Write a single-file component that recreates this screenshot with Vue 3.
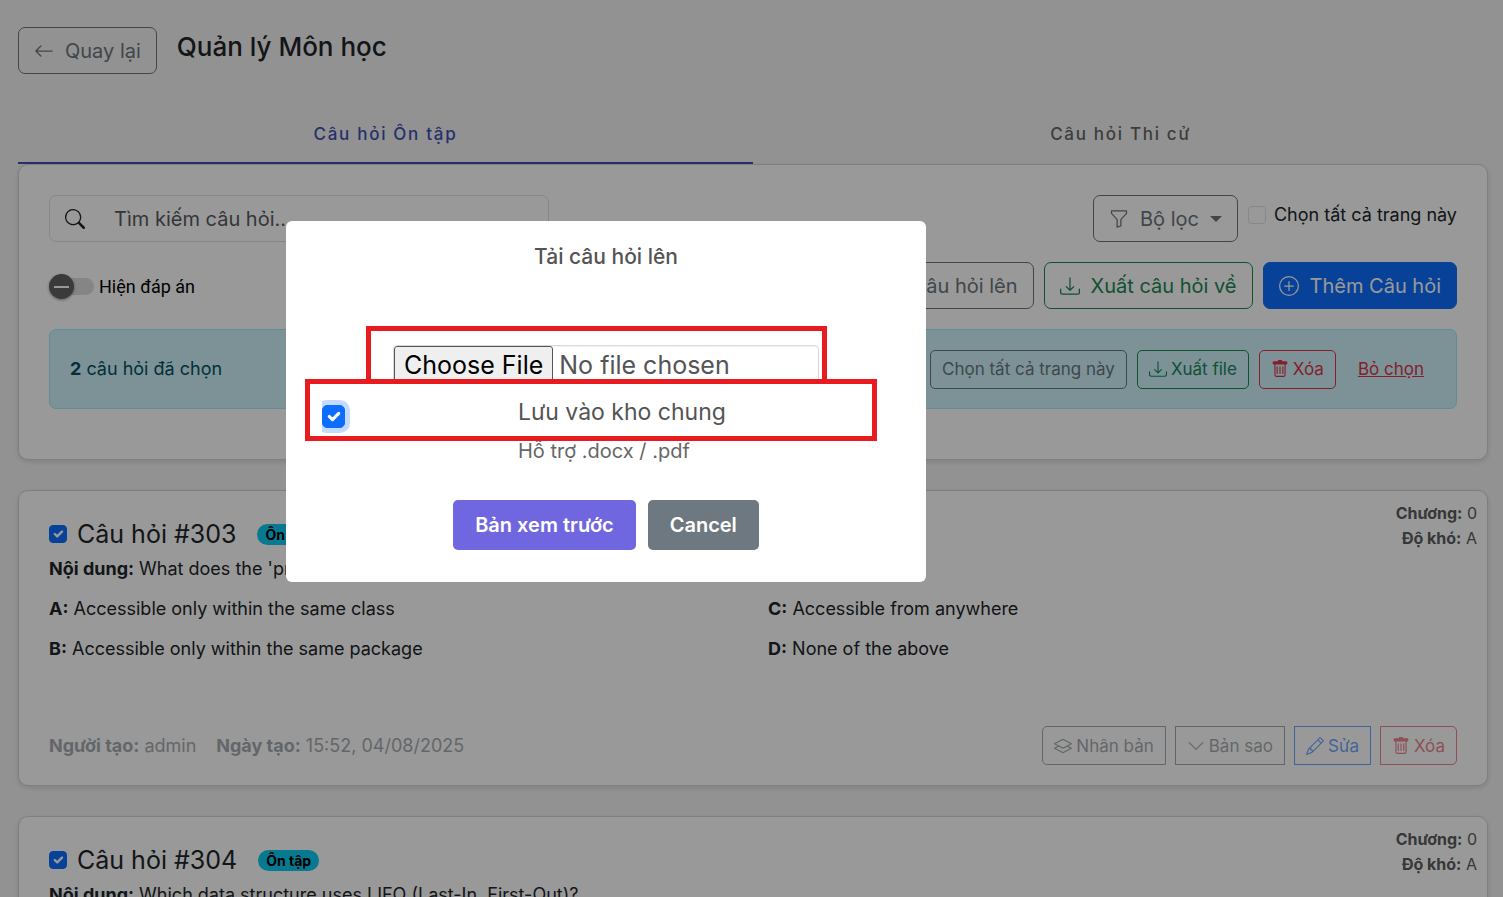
<script setup>
import { ref, h } from 'vue'

const paths = {
  back: ['M15 8a.5.5 0 0 0-.5-.5H2.707l3.147-3.146a.5.5 0 1 0-.708-.708l-4 4a.5.5 0 0 0 0 .708l4 4a.5.5 0 0 0 .708-.708L2.707 8.5H14.5A.5.5 0 0 0 15 8'],
  search: ['M11.742 10.344a6.5 6.5 0 1 0-1.397 1.398h-.001q.044.06.098.115l3.85 3.85a1 1 0 0 0 1.415-1.414l-3.85-3.85a1 1 0 0 0-.115-.1zM12 6.5a5.5 5.5 0 1 1-11 0 5.5 5.5 0 0 1 11 0'],
  funnel: ['M1.5 1.5A.5.5 0 0 1 2 1h12a.5.5 0 0 1 .5.5v2a.5.5 0 0 1-.128.334L10 8.692V13.5a.5.5 0 0 1-.342.474l-3 1A.5.5 0 0 1 6 14.5V8.692L1.628 3.834A.5.5 0 0 1 1.5 3.5zm1 .5v1.308l4.372 4.858A.5.5 0 0 1 7 8.5v5.306l2-.666V8.5a.5.5 0 0 1 .128-.334L13.5 3.308V2z'],
  download: ['M.5 9.9a.5.5 0 0 1 .5.5v2.5a1 1 0 0 0 1 1h12a1 1 0 0 0 1-1v-2.5a.5.5 0 0 1 1 0v2.5a2 2 0 0 1-2 2H2a2 2 0 0 1-2-2v-2.5a.5.5 0 0 1 .5-.5', 'M7.646 11.854a.5.5 0 0 0 .708 0l3-3a.5.5 0 0 0-.708-.708L8.5 10.293V1.5a.5.5 0 0 0-1 0v8.793L5.354 8.146a.5.5 0 1 0-.708.708z'],
  upload: ['M.5 9.9a.5.5 0 0 1 .5.5v2.5a1 1 0 0 0 1 1h12a1 1 0 0 0 1-1v-2.5a.5.5 0 0 1 1 0v2.5a2 2 0 0 1-2 2H2a2 2 0 0 1-2-2v-2.5a.5.5 0 0 1 .5-.5', 'M7.646 1.146a.5.5 0 0 1 .708 0l3 3a.5.5 0 0 1-.708.708L8.5 2.707V11.5a.5.5 0 0 1-1 0V2.707L5.354 4.854a.5.5 0 1 1-.708-.708z'],
  plus: ['M8 15A7 7 0 1 1 8 1a7 7 0 0 1 0 14m0 1A8 8 0 1 0 8 0a8 8 0 0 0 0 16', 'M8 4a.5.5 0 0 1 .5.5v3h3a.5.5 0 0 1 0 1h-3v3a.5.5 0 0 1-1 0v-3h-3a.5.5 0 0 1 0-1h3v-3A.5.5 0 0 1 8 4'],
  trash: ['M5.5 5.5A.5.5 0 0 1 6 6v6a.5.5 0 0 1-1 0V6a.5.5 0 0 1 .5-.5m2.5 0a.5.5 0 0 1 .5.5v6a.5.5 0 0 1-1 0V6a.5.5 0 0 1 .5-.5m3 .5a.5.5 0 0 0-1 0v6a.5.5 0 0 0 1 0z', 'M14.5 3a1 1 0 0 1-1 1H13v9a2 2 0 0 1-2 2H5a2 2 0 0 1-2-2V4h-.5a1 1 0 0 1-1-1V2a1 1 0 0 1 1-1H6a1 1 0 0 1 1-1h2a1 1 0 0 1 1 1h3.5a1 1 0 0 1 1 1zM4.118 4 4 4.059V13a1 1 0 0 0 1 1h6a1 1 0 0 0 1-1V4.059L11.882 4z'],
  pencil: ['M12.146.146a.5.5 0 0 1 .708 0l3 3a.5.5 0 0 1 0 .708l-10 10a.5.5 0 0 1-.168.11l-5 2a.5.5 0 0 1-.65-.65l2-5a.5.5 0 0 1 .11-.168zM11.207 2.5 13.5 4.793 14.793 3.5 12.5 1.207zm1.586 3L10.5 3.207 4 9.707V10h.5a.5.5 0 0 1 .5.5v.5h.5a.5.5 0 0 1 .5.5v.5h.293zm-9.761 5.175-.106.106-1.528 3.821 3.821-1.528.106-.106A.5.5 0 0 1 5 12.5V12h-.5a.5.5 0 0 1-.5-.5V11h-.5a.5.5 0 0 1-.468-.325'],
  chevron: ['M1.646 4.646a.5.5 0 0 1 .708 0L8 10.293l5.646-5.647a.5.5 0 0 1 .708.708l-6 6a.5.5 0 0 1-.708 0l-6-6a.5.5 0 0 1 0-.708'],
  layers: ['M8.235 1.559a.5.5 0 0 0-.47 0l-7.5 4a.5.5 0 0 0 0 .882L3.188 8 .264 9.559a.5.5 0 0 0 0 .882l7.5 4a.5.5 0 0 0 .47 0l7.5-4a.5.5 0 0 0 0-.882L12.813 8l2.922-1.559a.5.5 0 0 0 0-.882zm3.515 7.008L14.438 10 8 13.433 1.562 10 4.25 8.567l3.515 1.874a.5.5 0 0 0 .47 0zM8 9.433 1.562 6 8 2.567 14.438 6z'],
}

const Icon = (props) =>
  h('svg', { viewBox: '0 0 16 16', width: props.size, height: props.size, fill: 'currentColor', 'aria-hidden': 'true' },
    paths[props.name].map((d) => h('path', { d, 'fill-rule': 'evenodd' })))
Icon.props = { name: String, size: { type: Number, default: 20 } }

const showAnswers = ref(false)
const selectPage = ref(false)
const saveShared = ref(true)

const questions = ref([
  {
    id: 303,
    selected: true,
    text: "What does the 'private' access modifier mean?",
    answers: [
      ['A', 'Accessible only within the same class'],
      ['C', 'Accessible from anywhere'],
      ['B', 'Accessible only within the same package'],
      ['D', 'None of the above'],
    ],
  },
  {
    id: 304,
    selected: true,
    text: 'Which data structure uses LIFO (Last-In, First-Out)?',
    answers: [],
  },
])
</script>

<template>
  <div class="screen">
    <main class="page">
      <header class="head">
        <button type="button" class="btn grey"><Icon name="back" />Quay lại</button>
        <h1>Quản lý Môn học</h1>
      </header>

      <nav class="tabs">
        <button type="button" class="tab active">Câu hỏi Ôn tập</button>
        <button type="button" class="tab">Câu hỏi Thi cử</button>
      </nav>

      <section class="card tools">
        <div class="row">
          <div class="search">
            <Icon name="search" />
            <input type="text" aria-label="Tìm kiếm câu hỏi" placeholder="Tìm kiếm câu hỏi..." />
          </div>
          <div class="filters">
            <button type="button" class="btn grey"><Icon name="funnel" />Bộ lọc<span class="caret"></span></button>
            <label class="check-label"><input v-model="selectPage" type="checkbox" class="check" />Chọn tất cả trang này</label>
          </div>
        </div>
        <div class="row">
          <label class="toggle">
            <input v-model="showAnswers" type="checkbox" role="switch" />
            <span>Hiện đáp án</span>
          </label>
          <div class="group">
            <button type="button" class="btn grey"><Icon name="upload" />Tải câu hỏi lên</button>
            <button type="button" class="btn green"><Icon name="download" />Xuất câu hỏi về</button>
            <button type="button" class="btn solid"><Icon name="plus" />Thêm Câu hỏi</button>
          </div>
        </div>
        <div class="notice">
          <p><b>2</b> câu hỏi đã chọn</p>
          <div class="group">
            <button type="button" class="btn small grey">Chọn tất cả trang này</button>
            <button type="button" class="btn small green"><Icon name="download" :size="18" />Xuất file</button>
            <button type="button" class="btn small red"><Icon name="trash" :size="18" />Xóa</button>
            <button type="button" class="btn small link">Bỏ chọn</button>
          </div>
        </div>
      </section>

      <article v-for="q in questions" :key="q.id" class="card question">
        <div class="meta">
          <div><b>Chương:</b> 0</div>
          <div><b>Độ khó:</b> A</div>
        </div>
        <div class="title">
          <input v-model="q.selected" type="checkbox" class="check" :aria-label="'Chọn câu hỏi ' + q.id" />
          <h2>Câu hỏi #{{ q.id }}</h2>
          <span class="badge">Ôn tập</span>
        </div>
        <p class="content"><b>Nội dung:</b> {{ q.text }}</p>
        <div v-if="q.answers.length" class="answers">
          <p v-for="a in q.answers" :key="a[0]"><b>{{ a[0] }}:</b> {{ a[1] }}</p>
        </div>
        <footer v-if="q.answers.length">
          <div class="author">
            <span><b>Người tạo:</b> admin</span>
            <span><b>Ngày tạo:</b> 15:52, 04/08/2025</span>
          </div>
          <div class="actions">
            <button type="button" class="btn small grey"><Icon name="layers" :size="18" />Nhân bản</button>
            <button type="button" class="btn small grey"><Icon name="chevron" :size="18" />Bản sao</button>
            <button type="button" class="btn small blue"><Icon name="pencil" :size="18" />Sửa</button>
            <button type="button" class="btn small red"><Icon name="trash" :size="18" />Xóa</button>
          </div>
        </footer>
      </article>
    </main>

    <div class="backdrop">
      <div class="dialog" role="dialog" aria-modal="true" aria-labelledby="dialog-title">
        <h2 id="dialog-title">Tải câu hỏi lên</h2>
        <div class="file-clip">
          <input type="file" class="file" aria-label="Tải câu hỏi lên" accept=".docx,.pdf" />
        </div>
        <div class="share">
          <input id="share" v-model="saveShared" type="checkbox" class="check large" />
          <label for="share">Lưu vào kho chung</label>
        </div>
        <p class="hint">Hỗ trợ .docx / .pdf</p>
        <div class="dialog-actions">
          <button type="button" class="confirm">Bản xem trước</button>
          <button type="button" class="cancel">Cancel</button>
        </div>
        <div class="mark mark-file"></div>
        <div class="mark mark-share"></div>
      </div>
    </div>
  </div>
</template>

<style>
body {
  margin: 0;
  background: #f4f4f4;
}
</style>

<style scoped>
.screen {
  height: 100vh;
  overflow: hidden;
  font-family: Inter, "Noto Sans", sans-serif;
  font-size: 18px;
  line-height: 26px;
  color: #212529;
}
.screen * {
  box-sizing: border-box;
}
h1, h2, p {
  margin: 0;
  font-weight: 400;
}
button, input {
  font-family: inherit;
}
b {
  font-weight: 700;
}
svg {
  flex: none;
}
.page {
  padding: 27px 15px 0 18px;
}
.head {
  display: flex;
  gap: 20px;
  height: 77px;
  align-items: flex-start;
}
.head h1 {
  font-size: 26px;
  line-height: 40px;
  font-weight: 500;
}
.btn {
  display: inline-flex;
  align-items: center;
  gap: 11px;
  height: 47px;
  padding: 0 15px;
  border: 1px solid currentColor;
  border-radius: 7px;
  background: transparent;
  font-size: 20px;
  white-space: nowrap;
}
.btn.small {
  height: 39px;
  padding: 0 11px;
  gap: 4px;
  border-radius: 5px;
  font-size: 17px;
}
.grey { color: #6c757d; }
.green { color: #198754; }
.red { color: #dc3545; }
.blue { color: #0d6efd; }
.solid {
  background: #0d6efd;
  border-color: #0d6efd;
  color: #fff;
}
.btn.link {
  border-color: transparent;
  color: #dc3545;
  text-decoration: underline;
}
.tabs {
  display: flex;
  height: 60px;
}
.tab {
  flex: 1;
  border: 0;
  border-bottom: 2px solid transparent;
  background: none;
  padding: 2px 0 0;
  font-size: 17px;
  font-weight: 500;
  letter-spacing: 0.1em;
  color: #666;
}
.tab.active {
  color: #3f51b5;
  border-color: #3f51b5;
}
.card {
  position: relative;
  background: #fff;
  border: 1px solid #d4d4d4;
  border-radius: 10px;
  box-shadow: 0 2px 5px rgba(0, 0, 0, 0.12);
  padding: 30px;
  margin-bottom: 30px;
}
.tools {
  display: flex;
  flex-direction: column;
  gap: 20px;
  padding-bottom: 50px;
}
.row {
  display: flex;
  justify-content: space-between;
  align-items: center;
}
.search {
  display: flex;
  align-items: center;
  gap: 27px;
  width: 500px;
  height: 47px;
  padding-left: 15px;
  border: 1px solid #dee2e6;
  border-radius: 7px;
}
.search input {
  flex: 1;
  min-width: 0;
  border: 0;
  outline: 0;
  background: none;
  font-size: 20px;
}
.search input::placeholder {
  color: #585b5f;
}
.filters {
  display: flex;
  align-items: center;
  gap: 10px;
}
.caret {
  border: 6px solid transparent;
  border-top-color: currentColor;
  border-bottom: 0;
}
.check-label {
  display: flex;
  align-items: center;
  gap: 8px;
  padding-bottom: 7px;
}
.check {
  appearance: none;
  flex: none;
  width: 18px;
  height: 18px;
  margin: 0;
  border: 1px solid #dee2e6;
  border-radius: 4px;
}
.check:checked {
  border-color: #0d6efd;
  background: #0d6efd url("data:image/svg+xml,%3Csvg xmlns='http://www.w3.org/2000/svg' viewBox='0 0 20 20'%3E%3Cpath fill='none' stroke='%23fff' stroke-linecap='round' stroke-linejoin='round' stroke-width='3' d='m6 10 3 3 6-6'/%3E%3C/svg%3E") center / contain no-repeat;
}
.toggle {
  display: flex;
  align-items: center;
  gap: 5px;
  padding-top: 2px;
  font-family: Roboto, sans-serif;
  color: #000;
}
.toggle input {
  appearance: none;
  position: relative;
  width: 40px;
  height: 17px;
  margin: 0 0 0 5px;
  border-radius: 9px;
  background: #dedede;
}
.toggle input::before {
  content: "";
  position: absolute;
  left: -5px;
  top: -4px;
  width: 25px;
  height: 25px;
  border-radius: 50%;
  background: linear-gradient(#fff, #fff) center / 15px 2px no-repeat #616161;
  box-shadow: 0 1px 3px rgba(0, 0, 0, 0.4);
}
.group {
  display: flex;
  gap: 10px;
}
.notice {
  display: flex;
  align-items: center;
  justify-content: space-between;
  height: 80px;
  padding: 0 20px;
  border: 1px solid #9eeaf9;
  border-radius: 7px;
  background: #cff4fc;
  color: #055160;
}
.question {
  height: 296px;
}
.meta {
  position: absolute;
  top: 10px;
  right: 10px;
  font-size: 16px;
  line-height: 25px;
  text-align: right;
  color: #5a5d60;
}
.title {
  display: flex;
  align-items: center;
  gap: 10px;
  height: 26px;
}
.title h2 {
  font-size: 25px;
  margin-right: 11px;
}
.badge {
  padding: 0 8px;
  border-radius: 11px;
  background: #0dcaf0;
  font-size: 14px;
  line-height: 21px;
  font-weight: 700;
  color: #000;
}
.content {
  margin-top: 9px;
}
.answers {
  display: grid;
  grid-template-columns: 1fr 1fr;
  gap: 14px 30px;
  margin-top: 14px;
}
.question footer {
  display: flex;
  justify-content: space-between;
  align-items: center;
  margin-top: 64px;
  opacity: 0.6;
}
.author {
  display: flex;
  gap: 20px;
  color: #6c757d;
}
.actions {
  display: flex;
  gap: 9px;
}
.actions .btn {
  border-radius: 0;
}
.actions .btn:first-child {
  border-radius: 5px 0 0 5px;
}
.actions .btn:last-child {
  border-radius: 0 5px 5px 0;
}
.backdrop {
  position: fixed;
  inset: 0;
  display: flex;
  align-items: flex-start;
  padding: 221px 0 0 286px;
  background: rgba(0, 0, 0, 0.4);
}
.dialog {
  position: relative;
  width: 640px;
  padding: 21px 32px 32px;
  border-radius: 6px;
  background: #fff;
  color: #545454;
}
.dialog h2 {
  font-size: 21px;
  line-height: 30px;
  font-weight: 500;
  text-align: center;
}
.file-clip {
  height: 36px;
  margin: 73px 75px 0;
  overflow: hidden;
}
.file {
  display: block;
  width: 100%;
  height: 56px;
  border: 1px solid #d9d9d9;
  border-radius: 4px;
  box-shadow: inset 0 1px 1px rgba(0, 0, 0, 0.06);
  font-size: 25px;
  color: #545454;
}
.file::file-selector-button {
  margin: 0 6px 0 0;
  height: 38px;
  padding: 0 9px;
  border: 1px solid #555;
  border-radius: 3px;
  background: #efefef;
  font-family: inherit;
  font-size: 25px;
  color: #000;
}
.share {
  display: flex;
  align-items: flex-end;
  height: 30px;
  margin: 17px 0 0 4px;
  font-size: 23px;
  line-height: 28px;
}
.share label {
  align-self: flex-start;
  margin-left: 173px;
}
.check.large {
  width: 23px;
  height: 23px;
  border-radius: 5px;
  box-shadow: 0 0 0 5px rgba(13, 110, 253, 0.25);
  clip-path: inset(-5px -5px -5px 0);
}
.hint {
  margin: 10px 0 0 200px;
  font-size: 20px;
  line-height: 26px;
  color: #666;
}
.dialog-actions {
  display: flex;
  justify-content: center;
  gap: 12px;
  margin-top: 36px;
}
.dialog-actions button {
  height: 50px;
  padding: 0 22px;
  border: 0;
  border-radius: 5px;
  font-size: 20px;
  font-weight: 600;
  color: #fff;
}
.confirm { background: #7066e0; }
.cancel { background: #6e7881; }
.mark {
  position: absolute;
  border: 5px solid #e81b1e;
  pointer-events: none;
}
.mark-file {
  left: 80px;
  top: 105px;
  width: 461px;
  height: 58px;
}
.mark-share {
  left: 19px;
  top: 158px;
  width: 572px;
  height: 62px;
}
</style>
